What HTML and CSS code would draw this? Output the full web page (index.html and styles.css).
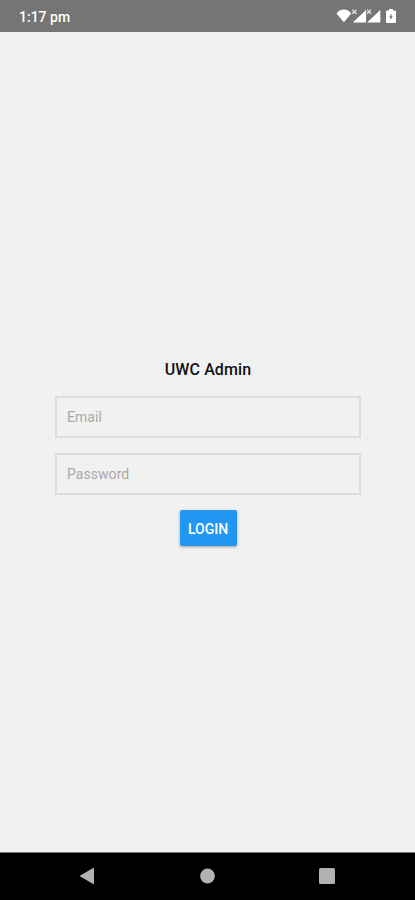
FILE: index.html
```
<!DOCTYPE html>
<html lang="en">
<head>
  <meta charset="UTF-8" />
  <meta name="viewport" content="width=device-width, initial-scale=1.0"/>
  <title>UWC Admin</title>
  <link rel="stylesheet" href="styles.css">
</head>
<body>
  <div class="status-bar">
    <span class="time">1:17 pm</span>
    <svg class="status-icons" width="61" height="16" viewBox="0 0 61 16" fill="#fff">
      <!-- wifi -->
      <path d="M.5 5.500C4 .2 11.600.2 15.200 5.500L8.600 13.500Q7.850 14.300 7.100 13.500Z"/>
      <!-- mobile signals -->
      <path d="M16.800 14.500L30 2V14.500Z"/>
      <path d="M31.200 14.500L44.300 2V14.500Z"/>
      <path class="no-data" d="M16.300 1.600l4.200 4.200M20.500 1.600l-4.200 4.200M30.900 1.600l4.200 4.200M35.100 1.600l-4.200 4.200"/>
      <!-- battery -->
      <path fill-rule="evenodd" d="M53 1h4v1.500h2a1 1 0 0 1 1 1V14a1 1 0 0 1-1 1h-8a1 1 0 0 1-1-1V3.500a1 1 0 0 1 1-1h2ZM55.500 5.500L53.200 9.300H54.500V12L56.800 8.200H55.500Z"/>
    </svg>
  </div>

  <main class="content">
    <h1>UWC Admin</h1>
    <form class="login-form">
      <input type="email" placeholder="Email">
      <input type="password" placeholder="Password">
      <button type="button">LOGIN</button>
    </form>
  </main>

  <div class="nav-bar">
    <svg width="18" height="20" viewBox="0 0 18 20"><path d="M1.500 10L16 1.500V18.500Z"/></svg>
    <svg width="18" height="20" viewBox="0 0 18 20"><circle cx="9.500" cy="10" r="7.400"/></svg>
    <svg width="18" height="20" viewBox="0 0 18 20"><rect x="1" y="2" width="16" height="16" rx="1.500"/></svg>
  </div>
</body>
</html>
```
FILE: styles.css
```
* { box-sizing: border-box; margin: 0; padding: 0; }
html, body { height: 100%; font-family: Roboto, sans-serif; overflow: hidden; }
body {
  display: flex;
  flex-direction: column;
  background: #f1f1f1;
}
.status-bar {
  display: flex; justify-content: space-between; align-items: center;
  height: 32px;
  padding: 0 18px 0 19px;
  background: #757575;
  color: #fff;
}
.time { font-size: 14px; font-weight: 500; line-height: 16px; padding-top: 2px; }
.no-data { fill: none; stroke: #e6e6e6; stroke-width: 1.3; }
.content {
  flex: 1;
  display: flex; flex-direction: column; align-items: center;
  padding: 327px 54px 0 55px;
}
h1 {
  font-size: 16px; font-weight: 500; line-height: 22px;
  letter-spacing: 0.1px;
  margin-bottom: 15px;
  color: #111;
}
.login-form {
  display: flex; flex-direction: column; align-items: center;
  width: 100%;
}
.login-form input {
  width: 100%; height: 42px;
  margin-bottom: 15px;
  padding: 0 10px;
  background: transparent;
  border: 2px solid #dddddd;
  border-radius: 0;
  font-family: inherit; font-size: 14px;
  letter-spacing: 0.05px;
  outline: none;
}
.login-form input::placeholder { color: #a9a9a9; }
.login-form button {
  width: 57px; height: 36px;
  padding-top: 1px;
  background: #2196f3;
  border: none; border-radius: 2px;
  box-shadow: 0 1px 3px rgba(0, 0, 0, 0.35);
  color: #fff;
  font-family: inherit; font-size: 14px; font-weight: 500;
}
.nav-bar {
  display: flex; justify-content: space-between; align-items: center;
  height: 48px;
  padding: 0 79px 1px 78px;
  background: #000;
  border-top: 1px solid #777;
}
.nav-bar svg { fill: #b1b1b1; }
```
